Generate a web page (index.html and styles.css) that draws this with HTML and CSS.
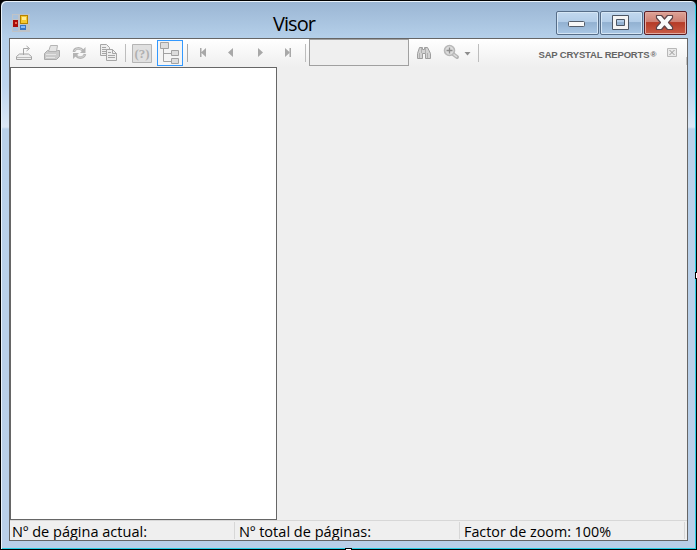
FILE: index.html
```html
<!DOCTYPE html>
<html lang="es">
<head>
<meta charset="utf-8">
<title>Visor</title>
<link rel="stylesheet" href="styles.css">
</head>
<body>
<div class="window">
  <header class="titlebar">
    <svg class="app-icon" width="18" height="18" viewBox="0 0 18 18"><path fill="#bfc3c7" d="M0 0h18v18H0z"/><path fill="#a8c1dc" d="M1 1h5v4H1zM1 13h5v4H1z"/><path fill="#a90d09" d="M1 6h5v7H1z"/><path fill="#ee6b50" d="M3 8h2v2H3z"/><path fill="#b58300" d="M8 1h8v9H8z"/><path fill="#f7c72e" d="M9 2h6v7H9z"/><path fill="#ffec91" d="M10 3h4v3h-4z"/><path fill="#3975c4" d="M8 11h6v5H8z"/><path fill="#82baff" d="M9 12h4v2H9z"/></svg>
    <h1 class="title">Visor</h1>
    <div class="controls">
      <button class="control" aria-label="Minimizar"><svg width="40" height="22" viewBox="0 0 40 22"><rect x="11.500" y="9.500" width="16" height="5" rx="1" fill="#f8f8f8" stroke="#555e6b"/></svg></button>
      <button class="control" aria-label="Maximizar"><svg width="40" height="22" viewBox="0 0 40 22"><path fill="#f4f4f4" stroke="#4c5664" fill-rule="evenodd" d="M11.500 3.500h16v14h-16zM15.500 7.500v6h8v-6z"/></svg></button>
      <button class="control control-close" aria-label="Cerrar"><svg width="40" height="22" viewBox="0 0 40 22"><path fill="#fafafa" stroke="#5e4549" stroke-width="1.200" stroke-linejoin="round" d="M11.500 3.500h5l3 3.500 3-3.500h5v2.500l-4 4.500 4 4.500v2.500h-5l-3-3.500-3 3.500h-5V15l4-4.500-4-4.500z"/></svg></button>
    </div>
  </header>
  <main class="client">
    <div class="toolbar">
      <svg class="tool" width="28" height="28" viewBox="10 39 28 28" fill="none" stroke="#a4a4a4"><path fill="#eee" d="M16.500 56.500l3-2.500h9l3 2.500v3h-15z"/><path stroke="#bbb" d="M17 57.500h14"/><path d="M23.500 55v-6.500h5M26.500 46l3 2.500-3 2.500"/></svg>
      <svg class="tool" width="28" height="28" viewBox="38 39 28 28"><path fill="#cacaca" stroke="#aaa" stroke-linejoin="round" d="M44.500 53.500l3-3h10l2 0v6l-3 3h-12z"/><path fill="#e5e5e5" stroke="#b4b4b4" d="M48.500 51.500l2-6h7l-1 6z"/><path stroke="#e4e4e4" d="M46 54.500h10M46 57.500h9"/></svg>
      <svg class="tool" width="28" height="28" viewBox="66 39 28 28" fill="none"><path stroke="#b4b4b4" stroke-width="2.600" d="M74 52c0-4 6-5 9-1.500M85 54c-1 4-6 5-9 1.500"/><path stroke="#d9d9d9" d="M74.500 51c1-3 5-3 7.500-1M84.500 55c-1 2.500-5 3-7 1"/><path fill="#b4b4b4" d="M85.500 47v6H80zM73 59v-6h6z"/></svg>
      <svg class="tool" width="28" height="28" viewBox="94 39 28 28"><g fill="#eee" stroke="#a6a6a6"><path d="M100.500 44.500h6l3 3v8h-9z"/><path fill="none" d="M102 47.500h4m-4 2h6m-6 2h6m-6 2h6"/><path d="M106.500 49.500h6l4 4v7h-10z"/><path fill="none" d="M112.500 49.500v4h4M108 52.500h3m-3 3h7m-7 2h7"/></g></svg>
      <svg class="tool" width="10" height="28" viewBox="122 39 10 28"><path stroke="#bdbdbd" d="M125.500 44v18"/></svg>
      <svg class="tool" width="25" height="28" viewBox="132 39 25 28"><path fill="#e0e0e0" stroke="#b5b5b5" d="M132.500 44.500h19v18h-19z"/><text class="help-glyph" x="142" y="58" text-anchor="middle">(?)</text></svg>
      <button class="tree-toggle" aria-label="Árbol de grupos"><svg width="24" height="24" viewBox="158 41 24 24" fill="#ddd" stroke="#a2a2a2"><path fill="none" d="M163.500 49v12.500h8M163.500 53.500h8"/><path d="M160.500 42.500h8v6h-8zM171.500 50.500h7v5h-7zM171.500 58.500h7v5h-7z"/></svg></button>
      <svg class="tool" width="122" height="28" viewBox="183 39 122 28" fill="#a8a8a8"><path d="M187 44h1v18h-1zM200 48h1.500v9H200zM206 48v9l-5-4.500zM233 48v9l-5-4.500zM258 48v9l5-4.500zM285 48v9l5-4.500zM289.500 48h1.500v9h-1.500z"/></svg>
      <svg class="tool" width="4" height="28" viewBox="305 39 4 28"><path fill="#bdbdbd" d="M305 44h1v18h-1z"/></svg>
      <input class="search" aria-label="Buscar" disabled>
      <svg class="tool" width="30" height="28" viewBox="409 39 30 28"><path fill="#d2d2d2" stroke="#9e9e9e" d="M417.500 53.500l2-6h3v2h2v-2h3l3 6v5h-5v-5h-3v5h-5z"/><path fill="none" stroke="#b0b0b0" d="M419.500 53v5M427.500 53v5M421.500 48v5M425.500 48v5"/></svg>
      <svg class="tool" width="34" height="28" viewBox="439 39 34 28"><path stroke="#b4b4b4" stroke-width="4" stroke-linecap="round" d="M453 54l4 3"/><path stroke="#ddd" stroke-width="1.500" d="M453 54l4 3"/><circle cx="449.500" cy="50.500" r="5" fill="#dcdcdc" stroke="#b8b8b8" stroke-width="1.600"/><path stroke="#8e8e8e" stroke-width="1.300" d="M446.500 50.500h6M449.500 47.500v6"/><path fill="#8d8d8d" d="M464.500 52h6l-3 3.500z"/></svg>
      <svg class="tool" width="10" height="28" viewBox="473 39 10 28"><path fill="#bdbdbd" d="M478 44h1v18h-1z"/></svg>
      <svg class="brand" width="128" height="28" viewBox="535 39 128 28"><text x="538.500" y="58" textLength="111">SAP CRYSTAL REPORTS</text><text class="reg" x="650.500" y="57">®</text></svg>
      <svg class="tool" width="24" height="28" viewBox="663 39 24 28" fill="none"><path fill="#eaeaea" stroke="#b8b8b8" d="M667.500 48.500h9v8h-9z"/><path stroke="#999" d="M669.500 50l5 5m0-5l-5 5"/><path stroke="#c2c2c2" d="M686.500 57v8"/></svg>
    </div>
    <div class="workspace"><aside class="group-tree"></aside><section class="report"></section></div>
    <footer class="status">
      <div class="cell"><svg width="220" height="18"><text x="2" y="15" textLength="135" lengthAdjust="spacingAndGlyphs">Nº de página actual:</text></svg></div>
      <div class="cell"><svg width="220" height="18"><text x="4" y="15" textLength="132" lengthAdjust="spacingAndGlyphs">Nº total de páginas:</text></svg></div>
      <div class="cell"><svg width="220" height="18"><text x="4" y="15" textLength="147" lengthAdjust="spacingAndGlyphs">Factor de zoom: 100%</text></svg></div>
    </footer>
  </main>
  <i class="handle handle-right"></i><i class="handle handle-bottom"></i>
</div>
</body>
</html>
```
FILE: styles.css
```css
* { box-sizing: border-box; }
body { margin: 0; background: #000; overflow: hidden; }
svg { display: block; flex: none; }
.window {
  position: relative; width: 697px; height: 550px;
  padding: 2px 7px 8px 8px;
  border: 1px solid #000; border-radius: 6px 6px 0 0;
  background: linear-gradient(#9ab5d3, #b4cfe9 36px, #bed5ee 85px, #dbe7f5 126px, #b9d1ea 128px, #b9cfe8);
  box-shadow: inset 1px 1px #e9f2fa, inset -1px -1px #28cde3;
}
.titlebar { display: flex; height: 35px; padding: 9px 2px 0 3px; align-items: flex-start; }
.app-icon { margin-top: 2px; }
.title {
  flex: 1; margin: -4px 0 0; padding-left: 0; text-align: center;
  font: 400 20px/32px "Open Sans", "Noto Sans", sans-serif; letter-spacing: -0.9px; color: #000;
  padding-left: 2px;
}
.controls { display: flex; gap: 1px; margin-top: -1px; }
.control {
  width: 43px; height: 24px; padding: 0; overflow: hidden;
  border: 1px solid #576e89; border-radius: 2px;
  background: linear-gradient(#c2d8ee, #b3cde8 44%, #92b1d1 48%, #abc8e5);
  box-shadow: inset 0 0 0 1px #d5e6f5;
}
.control-close {
  border-color: #5c1e25;
  background: linear-gradient(#dda397, #cf8073 44%, #b53b27 48%, #c95c46);
  box-shadow: inset 0 0 0 1px #e2aaa0;
}
.client { width: 679px; height: 503px; border: 1px solid #666; background: #efefef; }
.toolbar { display: flex; width: 677px; height: 28px; background: linear-gradient(#fff, #efefef); }
.tree-toggle { width: 26px; height: 26px; padding: 0; margin-top: 1px; border: 1px solid #3399ff; background: #f5f5f5; flex: none; }
.search { width: 100px; height: 27px; border: 1px solid #a0a0a0; background: #efefef; flex: none; padding: 0; margin: 0; }
.brand { margin: 0 0 0 auto; }
.brand text { font: 700 9.5px "Liberation Sans", sans-serif; fill: #656565; }
.brand .reg { font-size: 8px; }
.help-glyph { font: 700 13px "Liberation Serif", serif; fill: #b0b0b0; }
.workspace { display: flex; height: 453px; }
.group-tree { width: 267px; background: #fff; border: 1px solid #666; }
.report { flex: 1; }
.status { display: flex; height: 20px; border-top: 1px solid #d7d7d7; }
.status svg { overflow: hidden; }
.status text { font: 400 15px "Open Sans", "Noto Sans", sans-serif; fill: #000; }
.cell { width: 225px; height: 17px; margin-top: 1px; border-right: 1px solid #d7d7d7; }
.handle { position: absolute; background: #fff; border: 1px solid #000; }
.handle-right { width: 4px; height: 7px; right: -3px; top: 271px; }
.handle-bottom { width: 7px; height: 4px; left: 344px; bottom: -3px; }
```
